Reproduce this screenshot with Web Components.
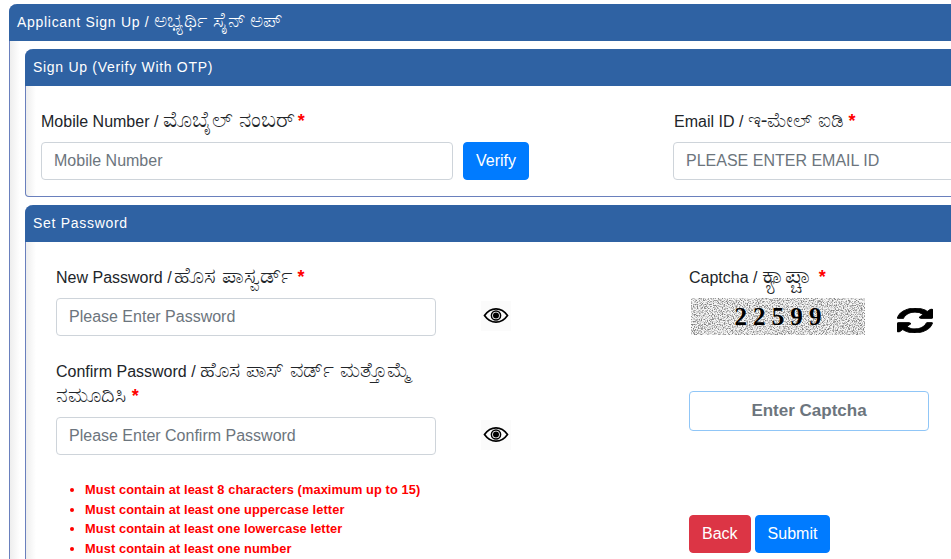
<!DOCTYPE html>
<html lang="en">
<head>
<meta charset="utf-8">
<title>Applicant Sign Up</title>
<style>
  html, body { margin: 0; padding: 0; height: 559px; overflow: hidden; background: #fff; }
  body { font-family: "Liberation Sans", "Noto Sans", sans-serif; color: #212529; }
</style>
</head>
<body>
<template id="tpl-panel">
  <style>
    :host { display: block; border: 1px solid #6a80bd; border-top: 0; border-radius: 8px 8px 4px 4px; background: linear-gradient(90deg, #eeeeee 0, #ffffff 10px); }
    .head { height: 37px; margin: 0 -1px; padding: 0 8px 1px; box-sizing: border-box; display: flex; align-items: center; background: #2f62a3; color: #fff; font-size: 14px; letter-spacing: .7px; border-radius: 8px 8px 0 0; }
    .body { display: block; }
  </style>
  <div class="head"><slot name="title"></slot></div>
  <div class="body"><slot></slot></div>
</template>

<template id="tpl-field">
  <style>
    :host { display: block; }
    label { display: block; font-size: 16px; line-height: 24.5px; margin-bottom: 8px; }
    .ctl { display: flex; align-items: flex-start; }
  </style>
  <label><slot name="label"></slot></label>
  <div class="ctl"><slot></slot></div>
</template>

<template id="tpl-kn">
  <style>
    :host { display: inline; font-size: 1.35em; line-height: 0; letter-spacing: 0; }
  </style>
  <slot></slot>
</template>

<template id="tpl-req">
  <style>
    :host { display: inline; color: #ff0000; font-weight: 700; font-size: 18px; line-height: 0; }
  </style>
  <slot></slot>
</template>

<template id="tpl-input">
  <style>
    :host { display: block; flex: 1 1 auto; }
    input { display: block; width: 100%; height: 38px; box-sizing: border-box; padding: 6px 12px; border: 1px solid #ced4da; border-radius: 4px; font: 16px "Liberation Sans", sans-serif; color: #495057; background: #fff; outline: 0; }
    input::placeholder { color: #6c757d; opacity: 1; }
  </style>
  <input type="text">
</template>

<template id="tpl-btn">
  <style>
    :host { display: inline-block; }
    button { display: block; height: 38px; padding: 6px 12px; border: 1px solid var(--btn, #007bff); border-radius: 4px; background: var(--btn, #007bff); color: #fff; font: 16px "Liberation Sans", sans-serif; }
  </style>
  <button type="button"><slot></slot></button>
</template>

<template id="tpl-eye">
  <style>
    :host { display: block; width: 30px; height: 30px; background: #fbfbfb; }
    svg { display: block; width: 30px; height: 30px; }
  </style>
  <svg viewBox="0 0 30 30" aria-hidden="true">
    <path d="M3.5 14.5C7 9.5 10.5 7.8 15 7.8s8 1.7 11.5 6.7C23 19.5 19.5 21.2 15 21.2S7 19.5 3.5 14.5z" fill="none" stroke="#000" stroke-width="1.7"/>
    <circle cx="15" cy="14.5" r="4.6" fill="none" stroke="#000" stroke-width="1.5"/>
    <circle cx="15" cy="14.5" r="3" fill="#000"/>
  </svg>
</template>

<template id="tpl-captcha">
  <style>
    :host { display: flex; align-items: flex-start; }
    .img { position: relative; width: 174px; height: 37px; margin-left: 2px; overflow: hidden; background: #eee; }
    .img svg { position: absolute; inset: 0; width: 100%; height: 100%; }
    .code { position: relative; display: block; text-align: center; font: bold 25px/37px "Liberation Serif", serif; letter-spacing: 6.1px; color: #000; padding-left: 6px; }
    .refresh { width: 36px; height: 25px; margin: 10px 0 0 32px; }
  </style>
  <div class="img">
    <svg aria-hidden="true">
      <filter id="noise" x="0" y="0" width="100%" height="100%">
        <feTurbulence type="fractalNoise" baseFrequency="0.8" numOctaves="2" seed="7"/>
        <feColorMatrix values="0 0 0 0 .22  0 0 0 0 .22  0 0 0 0 .22  3.6 0 0 0 -1.55"/>
      </filter>
      <rect width="100%" height="100%" fill="#f6f6f6"/>
      <rect width="100%" height="100%" filter="url(#noise)"/>
    </svg>
    <span class="code"><slot></slot></span>
  </div>
  <svg class="refresh" viewBox="128 128 1536 1536" preserveAspectRatio="none" aria-hidden="true">
    <path stroke="#000" stroke-width="45" d="M1639 1056q0 5-1 7-64 268-268 434.5t-478 166.5q-146 0-282.5-55t-243.5-157l-129 129q-19 19-45 19t-45-19-19-45v-448q0-26 19-45t45-19h448q26 0 45 19t19 45-19 45l-137 137q71 66 161 102t187 36q134 0 250-65t186-179q11-17 53-117 8-23 30-23h192q13 0 22.5 9.5t9.5 22.5zm25-800v448q0 26-19 45t-45 19h-448q-26 0-45-19t-19-45 19-45l138-138q-148-137-349-137-134 0-250 65t-186 179q-11 17-53 117-8 23-30 23h-199q-13 0-22.5-9.5t-9.5-22.5v-7q65-268 270-434.5t480-166.5q146 0 284 55.5t245 156.5l130-129q19-19 45-19t45 19 19 45z"/>
  </svg>
</template>

<template id="tpl-rules">
  <style>
    :host { display: block; }
    ul { margin: 0; padding: 0 0 0 29px; color: #ff0000; font-size: 12.8px; font-weight: 700; line-height: 19.6px; letter-spacing: .1px; }
  </style>
  <ul><slot></slot></ul>
</template>

<main style="display:block;width:1120px;margin:4px 0 0 9px">
  <form-panel>
    <span slot="title">Applicant Sign Up / <kn-text style="font-size:1.43em">ಅಭ್ಯರ್ಥಿ ಸೈನ್ ಅಪ್</kn-text></span>
    <div style="padding:8px 0 0 15px;display:grid;gap:8px">
      <form-panel>
        <span slot="title">Sign Up (Verify With OTP)</span>
        <div style="display:grid;grid-template-columns:488px 1fr;column-gap:144px;padding:23.5px 15px 16px">
          <form-field>
            <span slot="label">Mobile Number / <kn-text>ಮೊಬೈಲ್ ನಂಬರ್</kn-text><req-mark style="margin-left:-3px">*</req-mark></span>
            <text-box placeholder="Mobile Number"></text-box>
            <action-btn style="margin-left:10px">Verify</action-btn>
          </form-field>
          <form-field>
            <span slot="label" style="margin-left:1px">Email ID / <kn-text style="font-size:1.25em">ಇ-ಮೇಲ್ ಐಡಿ</kn-text><req-mark style="margin-left:-1px">*</req-mark></span>
            <text-box placeholder="PLEASE ENTER EMAIL ID"></text-box>
          </form-field>
        </div>
      </form-panel>
      <form-panel>
        <span slot="title">Set Password</span>
        <div style="display:grid;grid-template-columns:633px 1fr;padding:23.5px 0 40px 30px">
          <div style="display:grid;gap:24px;align-content:start">
            <form-field>
              <span slot="label">New Password /<kn-text style="margin-left:-4px">ಹೊಸ ಪಾಸ್ವರ್ಡ್</kn-text> <req-mark>*</req-mark></span>
              <text-box placeholder="Please Enter Password" style="flex:0 0 380px"></text-box>
              <eye-toggle style="margin:3px 0 0 45px"></eye-toggle>
            </form-field>
            <form-field>
              <span slot="label" style="display:block;width:380px">Confirm Password / <kn-text style="font-size:1.315em">ಹೊಸ ಪಾಸ್ ವರ್ಡ್ ಮತ್ತೊಮ್ಮೆ ನಮೂದಿಸಿ</kn-text> <req-mark>*</req-mark></span>
              <text-box placeholder="Please Enter Confirm Password" style="flex:0 0 380px"></text-box>
              <eye-toggle style="margin:3px 0 0 45px"></eye-toggle>
            </form-field>
            <rule-list style="margin-top:1px">
              <li>Must contain at least 8 characters (maximum up to 15)</li>
              <li>Must contain at least one uppercase letter</li>
              <li>Must contain at least one lowercase letter</li>
              <li>Must contain at least one number</li>
            </rule-list>
          </div>
          <div style="display:flex;flex-direction:column;align-items:flex-start">
            <form-field>
              <span slot="label">Captcha / <kn-text style="font-size:1.55em">ಕ್ಯಾಪ್ಚಾ</kn-text> <req-mark>*</req-mark></span>
              <captcha-box>22599</captcha-box>
            </form-field>
            <text-box placeholder="Enter Captcha" data-kind="captcha" style="flex:none;width:240px;margin-top:56px"></text-box>
            <div style="display:flex;gap:4px;margin-top:84px">
              <action-btn style="--btn:#dc3545">Back</action-btn>
              <action-btn>Submit</action-btn>
            </div>
          </div>
        </div>
      </form-panel>
    </div>
  </form-panel>
</main>

<script>
function stamp(host, id) {
  const root = host.attachShadow({ mode: 'open' });
  root.appendChild(document.getElementById(id).content.cloneNode(true));
  return root;
}

class FormPanel extends HTMLElement {
  constructor() { super(); stamp(this, 'tpl-panel'); }
}
customElements.define('form-panel', FormPanel);

class FormField extends HTMLElement {
  constructor() { super(); stamp(this, 'tpl-field'); }
}
customElements.define('form-field', FormField);

class KnText extends HTMLElement {
  constructor() { super(); stamp(this, 'tpl-kn'); }
}
customElements.define('kn-text', KnText);

class ReqMark extends HTMLElement {
  constructor() { super(); stamp(this, 'tpl-req'); }
}
customElements.define('req-mark', ReqMark);

class TextBox extends HTMLElement {
  constructor() { super(); stamp(this, 'tpl-input'); }
  connectedCallback() {
    const input = this.shadowRoot.querySelector('input');
    input.placeholder = this.getAttribute('placeholder') || '';
    if (this.dataset.kind === 'captcha') {
      input.style.cssText = 'height:40px;border-color:#90c6f7;text-align:center;font-weight:700;font-size:17px';
    }
  }
}
customElements.define('text-box', TextBox);

class ActionBtn extends HTMLElement {
  constructor() { super(); stamp(this, 'tpl-btn'); }
}
customElements.define('action-btn', ActionBtn);

class EyeToggle extends HTMLElement {
  constructor() { super(); stamp(this, 'tpl-eye'); }
}
customElements.define('eye-toggle', EyeToggle);

class CaptchaBox extends HTMLElement {
  constructor() { super(); stamp(this, 'tpl-captcha'); }
}
customElements.define('captcha-box', CaptchaBox);

class RuleList extends HTMLElement {
  constructor() { super(); stamp(this, 'tpl-rules'); }
}
customElements.define('rule-list', RuleList);
</script>
</body>
</html>
